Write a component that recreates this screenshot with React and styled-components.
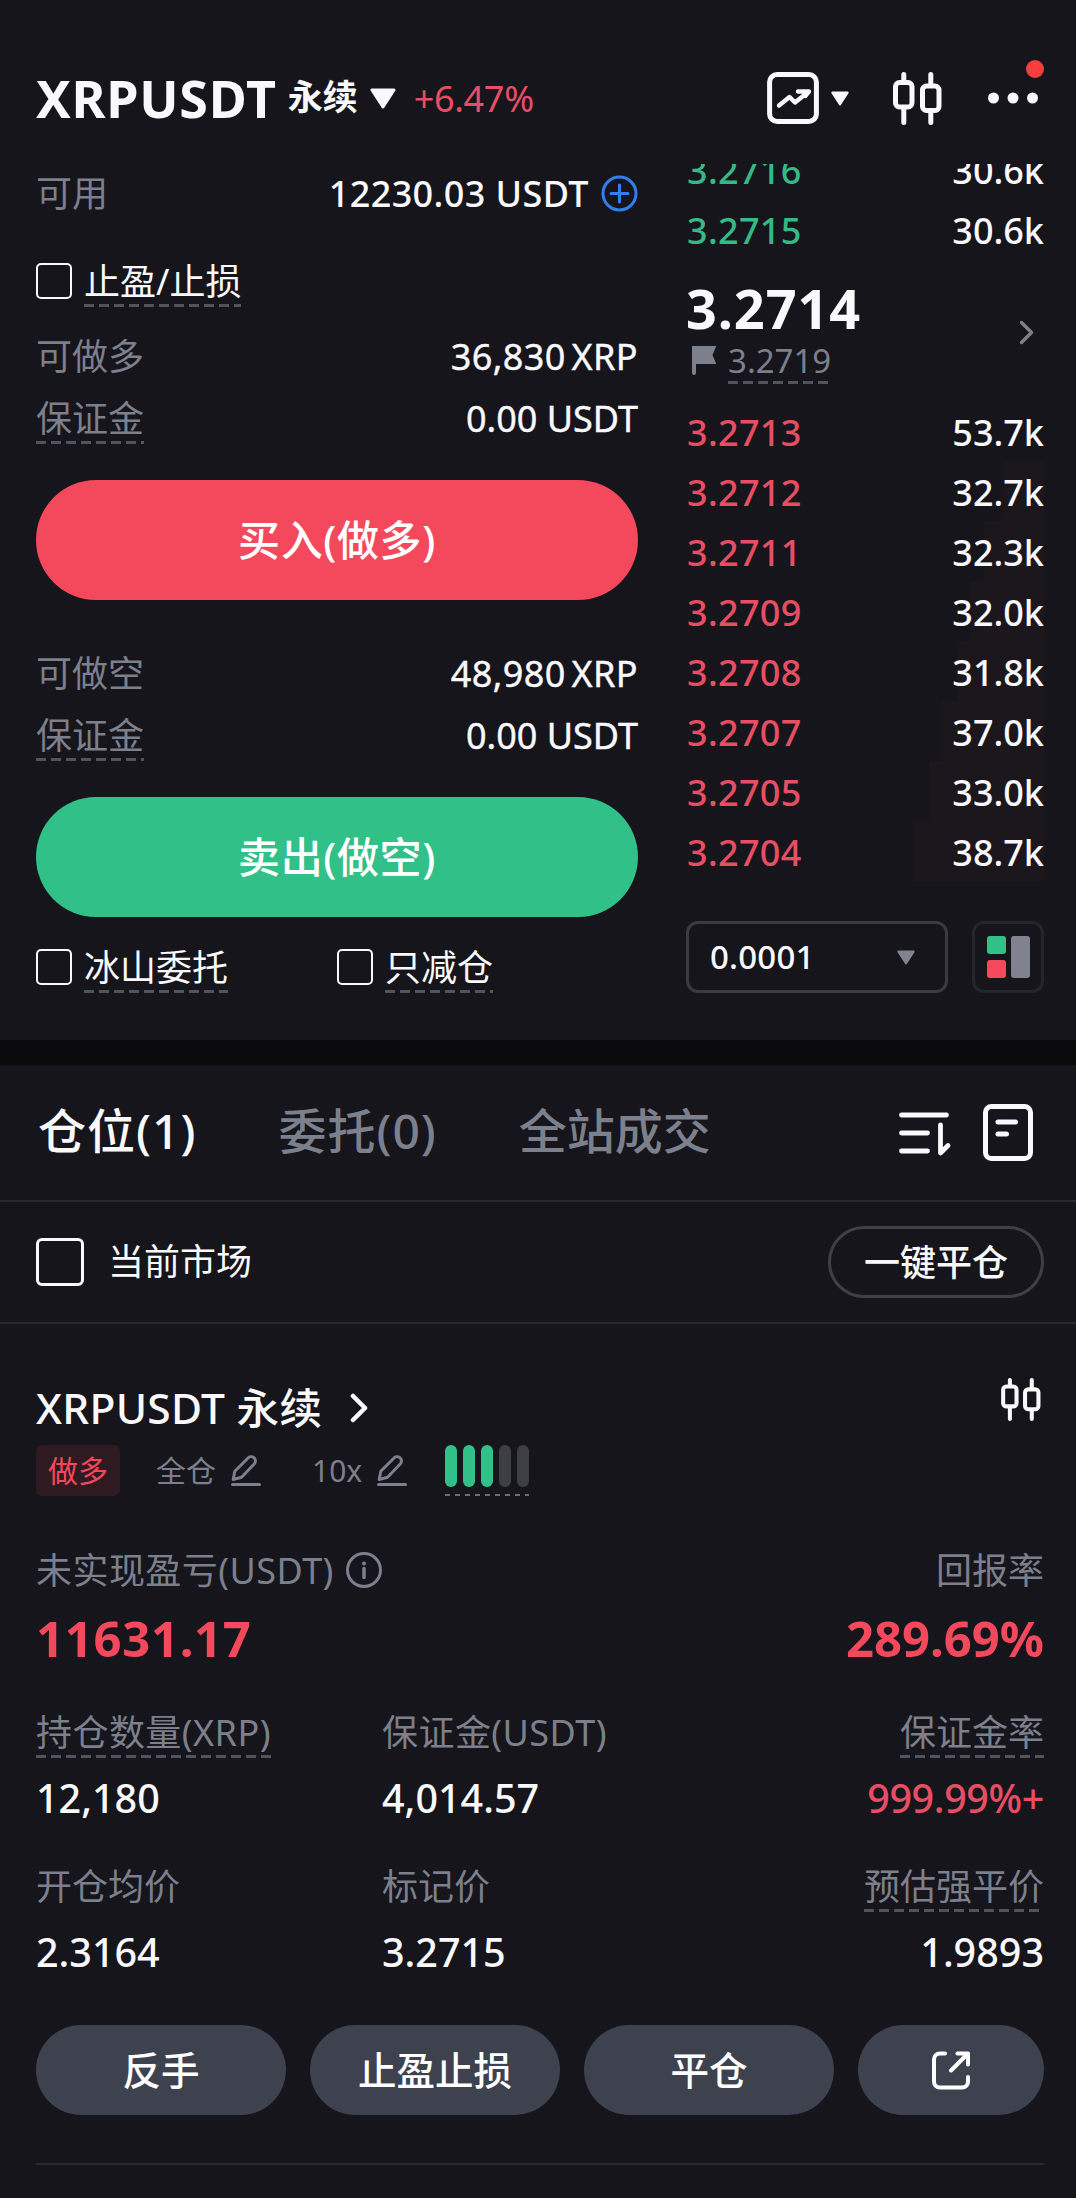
import React, { useState } from 'react';
import styled, { createGlobalStyle } from 'styled-components';

const GlobalStyle = createGlobalStyle`
  * {
    box-sizing: border-box;
  }
  body {
    margin: 0;
    background: #15151b;
    color: #f9f9fc;
    font-family: 'Noto Sans', 'Noto Sans CJK SC', sans-serif;
    font-size: 36px;
    line-height: 52px;
    white-space: nowrap;
  }
  svg {
    display: block;
    flex: none;
  }
`;

const colors = {
  white: '#f9f9fc',
  gray: '#7c7f8c',
  red: '#e84e63',
  green: '#35b986',
  buy: '#f4495d',
  sell: '#31c088',
  line: '#292a30',
};

const Page = styled.main`
  width: 1076px;
  height: 2198px;
  overflow: hidden;
`;

const Header = styled.header`
  display: flex;
  align-items: center;
  height: 164px;
  padding: 32px 36px 0;
`;

const Symbol = styled.h1`
  margin: 0;
  font-size: 52px;
  font-weight: 700;
  letter-spacing: 0.7px;
`;

const ContractType = styled.span`
  margin: -2px 12px 0 11px;
  font-size: 35px;
  font-weight: 700;
`;

const Change = styled.span`
  margin-left: 18px;
  padding-top: 2px;
  letter-spacing: -0.3px;
  color: ${colors.red};
`;

const HeaderTools = styled.div`
  display: flex;
  align-items: center;
  margin-left: auto;
`;

const ModeButton = styled.div`
  display: flex;
  align-items: center;
  gap: 12px;
  margin-right: 44px;
`;

const MoreButton = styled.div`
  position: relative;
  margin: 0 2px 0 46px;
`;

const RedDot = styled.span`
  position: absolute;
  top: -32px;
  right: -6px;
  width: 18px;
  height: 18px;
  border-radius: 50%;
  background: #fa3e3e;
`;

const Trade = styled.section`
  display: grid;
  grid-template-columns: 602px 358px;
  column-gap: 48px;
  height: 876px;
  padding: 0 32px 0 36px;
  overflow: hidden;
`;

const InfoRow = styled.div`
  display: flex;
  align-items: center;
  justify-content: space-between;
  height: ${(p) => p.$height || 62}px;
`;

const Label = styled.span`
  padding-top: 2px;
  color: ${colors.gray};
`;

const Hint = styled.span`
  display: inline-block;
  height: ${(p) => p.$height || 52}px;
  line-height: ${(p) => (p.$height || 52) + 2}px;
  color: ${(p) => (p.$light ? colors.white : colors.gray)};
  background: repeating-linear-gradient(90deg, #51535d 0 10px, transparent 10px 15px) left bottom / 100% 3px
    no-repeat;
`;

const Amount = styled.span`
  padding-top: 2px;
  font-weight: ${(p) => (p.$strong ? 500 : 400)};
  letter-spacing: ${(p) => (p.$strong || p.$tight ? 0.4 : 0)}px;
  word-spacing: ${(p) => (p.$tight ? -4 : 0)}px;
  -webkit-text-stroke: ${(p) => (p.$strong ? 0 : 0.4)}px currentColor;
`;

const Available = styled.div`
  display: flex;
  align-items: center;
  gap: 12px;
`;

const CheckRow = styled.div`
  display: grid;
  grid-template-columns: 301px 301px;
  height: 52px;
  margin: ${(p) => p.$margin};
`;

const CheckLabel = styled.label`
  display: flex;
  align-items: center;
  gap: ${(p) => (p.$large ? 24 : 12)}px;
`;

const CheckBox = styled.span`
  width: ${(p) => (p.$large ? 48 : 36)}px;
  height: ${(p) => (p.$large ? 48 : 36)}px;
  border: ${(p) => (p.$large ? 3 : 2)}px solid ${colors.white};
  border-radius: ${(p) => (p.$large ? 6 : 5)}px;
`;

const OrderButton = styled.button`
  display: block;
  width: 100%;
  height: 120px;
  margin: 31px 0 ${(p) => (p.$side === 'buy' ? 42 : 24)}px;
  padding: 0;
  border: 0;
  border-radius: 60px;
  background: ${(p) => colors[p.$side]};
  color: #fff;
  font: 500 42px/120px 'Noto Sans', 'Noto Sans CJK SC', sans-serif;
  letter-spacing: 0.6px;
`;

const Book = styled.div`
  display: flex;
  flex-direction: column;
`;

const Bids = styled.div`
  display: flex;
  flex-direction: column;
  justify-content: flex-end;
  height: 95px;
  overflow: hidden;
`;

const BookRow = styled.div`
  display: flex;
  flex: none;
  align-items: center;
  justify-content: space-between;
  height: 60px;
  padding: 3px 0 0 1px;
  font-weight: 500;
  color: ${(p) => colors[p.$color]};
  letter-spacing: 0.3px;
`;

const Size = styled.span`
  color: ${colors.white};
  letter-spacing: 0;
`;

const LastPrice = styled.div`
  display: flex;
  align-items: center;
  justify-content: space-between;
  height: 142px;
  padding: 4px 10px 0 0;
`;

const Price = styled.div`
  height: 56px;
  font-size: 54px;
  font-weight: 700;
  line-height: 56px;
  letter-spacing: 0.9px;
`;

const MarkPrice = styled.div`
  display: flex;
  align-items: center;
  gap: 12px;
  height: 48px;
  padding-left: 6px;
  font-size: 33px;
`;

const BookFooter = styled.div`
  display: flex;
  gap: 24px;
  margin-top: 40px;
`;

const Select = styled.div`
  display: flex;
  align-items: center;
  justify-content: space-between;
  width: 262px;
  height: 72px;
  padding: 0 30px 0 21px;
  border: 3px solid #3a3b41;
  border-radius: 12px;
  font-size: 33px;
  font-weight: 500;
  letter-spacing: 0.2px;
`;

const LayoutButton = styled.div`
  display: grid;
  grid-template: 18px 18px / 19px 19px;
  gap: 6px 5px;
  place-content: center;
  width: 72px;
  height: 72px;
  border: 3px solid #24262c;
  border-radius: 12px;
`;

const Cell = styled.span`
  border-radius: 3px;
  background: ${(p) => p.$color};
  grid-row: ${(p) => p.$row};
  grid-column: ${(p) => p.$column};
`;

const Divider = styled.div`
  height: 25px;
  background: #0b0b0e;
`;

const Tabs = styled.nav`
  display: flex;
  align-items: center;
  gap: 82px;
  height: 137px;
  padding: 0 43px 0 38px;
  border-bottom: 2px solid ${colors.line};
`;

const Tab = styled.span`
  padding-bottom: 4px;
  font-size: 48px;
  font-weight: 500;
  letter-spacing: ${(p) => (p.$wide ? 1 : 0)}px;
  color: ${(p) => (p.$active ? colors.white : colors.gray)};
`;

const TabTools = styled.div`
  display: flex;
  align-items: center;
  gap: 31px;
  margin-left: auto;
`;

const FilterBar = styled.div`
  display: flex;
  align-items: center;
  justify-content: space-between;
  height: 122px;
  padding: 0 32px 0 36px;
  border-bottom: 2px solid ${colors.line};
`;

const CloseAll = styled.button`
  width: 216px;
  height: 72px;
  padding: 0;
  border: 3px solid #3f4046;
  border-radius: 36px;
  background: none;
  color: ${colors.white};
  font: 500 36px/68px 'Noto Sans', 'Noto Sans CJK SC', sans-serif;
`;

const Position = styled.section`
  padding: 53px 32px 0 36px;
`;

const TitleRow = styled.div`
  display: flex;
  align-items: center;
  height: 60px;
  padding-top: 1px;
  font-size: 42.5px;
  font-weight: 500;
  letter-spacing: 0.3px;
  svg {
    margin-left: 28px;
  }
  svg:last-child {
    margin: -16px 3px 0 auto;
  }
`;

const TagRow = styled.div`
  display: flex;
  align-items: center;
  height: 67px;
  font-size: 30px;
  color: ${colors.gray};
`;

const SideTag = styled.span`
  width: 84px;
  height: 51px;
  margin-right: 36px;
  border-radius: 6px;
  background: #301a22;
  color: ${colors.buy};
  line-height: 51px;
  text-align: center;
`;

const Editable = styled.span`
  display: flex;
  align-items: center;
  gap: 15px;
  margin-right: ${(p) => p.$space}px;
`;

const Risk = styled.div`
  display: flex;
  gap: 6px;
  height: 51px;
  background: repeating-linear-gradient(90deg, #6b6d76 0 5px, transparent 5px 10px) left bottom / 100% 2px
    no-repeat;
`;

const RiskBar = styled.span`
  width: 12px;
  height: 42px;
  border-radius: 6px;
  background: ${(p) => (p.$on ? colors.sell : '#3e3f44')};
`;

const PnlRow = styled.div`
  display: flex;
  justify-content: space-between;
  margin-top: 40px;
`;

const Stat = styled.div`
  display: flex;
  flex-direction: column;
  align-items: ${(p) => (p.$end ? 'flex-end' : 'flex-start')};
`;

const StatLabel = styled.div`
  display: flex;
  gap: 12px;
  height: 52px;
  color: ${colors.gray};
  line-height: 54px;
  letter-spacing: ${(p) => (p.$wide ? 0.45 : 0)}px;
  svg {
    margin-top: 8px;
  }
`;

const Pnl = styled.div`
  height: 56px;
  margin-top: 14px;
  font-size: 49px;
  font-weight: 700;
  line-height: 56px;
  letter-spacing: ${(p) => p.$spacing}px;
  color: ${colors.buy};
`;

const StatGrid = styled.div`
  display: grid;
  grid-template-columns: 346px 1fr auto;
  row-gap: 36px;
  margin-top: 40px;
`;

const StatValue = styled.div`
  height: 52px;
  margin-top: 14px;
  font-size: 39.5px;
  font-weight: 500;
  letter-spacing: ${(p) => (p.$red ? -0.4 : 0)}px;
  color: ${(p) => (p.$red ? colors.red : colors.white)};
`;

const Actions = styled.div`
  display: grid;
  grid-template-columns: repeat(3, 250px) 186px;
  column-gap: 24px;
  margin-top: 47px;
  padding-bottom: 48px;
  border-bottom: 2px solid ${colors.line};
`;

const Action = styled.button`
  display: flex;
  align-items: center;
  justify-content: center;
  height: 90px;
  padding: 0;
  border: 0;
  border-radius: 45px;
  background: #3d424e;
  color: #fff;
  font: 500 38.5px/90px 'Noto Sans', 'Noto Sans CJK SC', sans-serif;
`;

function Triangle({ width, height, color = colors.white }) {
  return (
    <svg width={width} height={height} viewBox="0 0 26 21">
      <path d="M2 2h22L13 19z" fill={color} stroke={color} strokeWidth="3" strokeLinejoin="round" />
    </svg>
  );
}

function ChartIcon() {
  return (
    <svg width="52" height="52" viewBox="0 0 52 52" fill="none" stroke={colors.white}>
      <rect x="2.6" y="2.6" width="46.8" height="46.8" rx="7.5" strokeWidth="5" />
      <path
        d="M12 33.5l10.5-8.5 5.5 5.5 12.5-10M31 19.5h11l-3.5 4.5"
        strokeWidth="4.4"
        strokeLinecap="round"
        strokeLinejoin="round"
      />
    </svg>
  );
}

function CandlesIcon({ width, height }) {
  return (
    <svg width={width} height={height} viewBox="0 0 49 53" fill="none" stroke={colors.white} strokeWidth="5">
      <rect x="2.5" y="10.5" width="16.5" height="24.5" rx="4" />
      <rect x="29.5" y="14" width="16.5" height="24.5" rx="4" />
      <path d="M10.8 2.5v7M10.8 36v14.5M37.8 2.5v11M37.8 39.5v11" strokeLinecap="round" />
    </svg>
  );
}

function DotsIcon() {
  return (
    <svg width="50" height="12" viewBox="0 0 50 12" fill={colors.white}>
      <circle cx="5.5" cy="6" r="5.5" />
      <circle cx="25" cy="6" r="5.5" />
      <circle cx="44.5" cy="6" r="5.5" />
    </svg>
  );
}

function PlusIcon() {
  return (
    <svg width="37" height="37" viewBox="0 0 37 37" fill="none" stroke="#2f80ed" strokeWidth="3">
      <circle cx="18.5" cy="18.5" r="16.5" />
      <path d="M18.5 10v17M10 18.5h17" strokeLinecap="round" />
    </svg>
  );
}

function FlagIcon() {
  return (
    <svg width="24" height="29" viewBox="0 0 24 29" fill={colors.gray}>
      <path d="M0 0h23.5q1 0 .4 1L20.500 9l3.400 8q.4 1-.5 1H4v9a2 2 0 0 1-4 0z" />
    </svg>
  );
}

function Chevron({ color, width, height, stroke }) {
  return (
    <svg width={width} height={height} viewBox="0 0 15 25" fill="none" stroke={color} strokeWidth={stroke}>
      <path d="M2.5 2.5l10 10-10 10" strokeLinecap="round" strokeLinejoin="round" />
    </svg>
  );
}

function SortIcon() {
  return (
    <svg
      width="53"
      height="46"
      viewBox="0 0 53 46"
      fill="none"
      stroke={colors.white}
      strokeWidth="4.8"
      strokeLinecap="round"
      strokeLinejoin="round"
    >
      <path d="M2.5 5h45M2.5 23h26M2.5 41h26M41.5 15v28l7.5-7.5" />
    </svg>
  );
}

function DocIcon() {
  return (
    <svg width="50" height="57" viewBox="0 0 50 57" fill="none" stroke={colors.white} strokeLinecap="round">
      <rect x="2.5" y="2.5" width="45" height="52" rx="6" strokeWidth="5" />
      <path d="M15 18h17.5M15 30h8.5" strokeWidth="5" />
    </svg>
  );
}

function EditIcon() {
  return (
    <svg width="30" height="32" viewBox="0 0 30 32" fill="none" stroke={colors.gray} strokeWidth="3">
      <path d="M2.2 24.5l1.6-8.3L16.8 3.2a4.3 4.3 0 0 1 6.6 5.6L10.6 22.3z" strokeLinejoin="round" />
      <path d="M1.5 29.5h27" strokeLinecap="round" />
    </svg>
  );
}

function InfoIcon() {
  return (
    <svg width="36" height="36" viewBox="0 0 36 36" fill="none" stroke={colors.gray}>
      <circle cx="18" cy="18" r="16.5" strokeWidth="3" />
      <path d="M18 16.5v9" strokeWidth="3.5" strokeLinecap="round" />
      <circle cx="18" cy="11.5" r="2" fill={colors.gray} stroke="none" />
    </svg>
  );
}

function ShareIcon() {
  return (
    <svg
      width="38"
      height="39"
      viewBox="0 0 38 39"
      fill="none"
      stroke="#fff"
      strokeWidth="4"
      strokeLinecap="round"
      strokeLinejoin="round"
    >
      <path d="M13 2.5H8a6 6 0 0 0-6 6v22a6 6 0 0 0 6 6h22a6 6 0 0 0 6-6V26" />
      <path d="M25.5 2.5H36v11M36 2.5L19 19.5" />
    </svg>
  );
}

const bids = [
  { price: '3.2716', size: '30.6k' },
  { price: '3.2715', size: '30.6k' },
];

const asks = [
  { price: '3.2713', size: '53.7k', depth: 0 },
  { price: '3.2712', size: '32.7k', depth: 40 },
  { price: '3.2711', size: '32.3k', depth: 60 },
  { price: '3.2709', size: '32.0k', depth: 73 },
  { price: '3.2708', size: '31.8k', depth: 87 },
  { price: '3.2707', size: '37.0k', depth: 102 },
  { price: '3.2705', size: '33.0k', depth: 115 },
  { price: '3.2704', size: '38.7k', depth: 131 },
];

const stats = [
  { label: '持仓数量(XRP)', value: '12,180', hint: true, wide: true },
  { label: '保证金(USDT)', value: '4,014.57', wide: true },
  { label: '保证金率', value: '999.99%+', hint: true, red: true, end: true },
  { label: '开仓均价', value: '2.3164' },
  { label: '标记价', value: '3.2715' },
  { label: '预估强平价', value: '1.9893', hint: true, end: true },
];

const tabs = [
  { label: '仓位', count: 1 },
  { label: '委托', count: 0 },
  { label: '全站成交' },
];

function depthStyle(depth) {
  return {
    background: `linear-gradient(rgba(246, 73, 93, 0.03), rgba(246, 73, 93, 0.03)) right / ${depth}px 100% no-repeat`,
  };
}

function OrderInfo({ label, amount, margin }) {
  return (
    <>
      <InfoRow>
        <Label>{label}</Label>
        <Amount $tight>{amount}</Amount>
      </InfoRow>
      <InfoRow>
        <Hint>保证金</Hint>
        <Amount>{margin}</Amount>
      </InfoRow>
    </>
  );
}

function OrderForm() {
  return (
    <div>
      <InfoRow $height={58}>
        <Label>可用</Label>
        <Available>
          <Amount $strong>12230.03 USDT</Amount>
          <PlusIcon />
        </Available>
      </InfoRow>
      <CheckRow $margin="33px 0 18px">
        <CheckLabel>
          <CheckBox />
          <Hint $light>止盈/止损</Hint>
        </CheckLabel>
      </CheckRow>
      <OrderInfo label="可做多" amount="36,830 XRP" margin="0.00 USDT" />
      <OrderButton type="button" $side="buy">
        买入(做多)
      </OrderButton>
      <OrderInfo label="可做空" amount="48,980 XRP" margin="0.00 USDT" />
      <OrderButton type="button" $side="sell">
        卖出(做空)
      </OrderButton>
      <CheckRow $margin="0">
        <CheckLabel>
          <CheckBox />
          <Hint $light>冰山委托</Hint>
        </CheckLabel>
        <CheckLabel>
          <CheckBox />
          <Hint $light>只减仓</Hint>
        </CheckLabel>
      </CheckRow>
    </div>
  );
}

function OrderBook() {
  return (
    <Book>
      <Bids>
        {bids.map((row) => (
          <BookRow key={row.price} $color="green">
            {row.price}
            <Size>{row.size}</Size>
          </BookRow>
        ))}
      </Bids>
      <LastPrice>
        <div>
          <Price>3.2714</Price>
          <MarkPrice>
            <FlagIcon />
            <Hint $height={48}>3.2719</Hint>
          </MarkPrice>
        </div>
        <Chevron color={colors.gray} width={15} height={25} stroke={3.5} />
      </LastPrice>
      {asks.map((row) => (
        <BookRow key={row.price} $color="red" style={depthStyle(row.depth)}>
          {row.price}
          <Size>{row.size}</Size>
        </BookRow>
      ))}
      <BookFooter>
        <Select>
          0.0001
          <Triangle width={18} height={15} color="#80838f" />
        </Select>
        <LayoutButton>
          <Cell $color={colors.sell} $row="1" $column="1" />
          <Cell $color={colors.buy} $row="2" $column="1" />
          <Cell $color="#80838f" $row="1 / 3" $column="2" />
        </LayoutButton>
      </BookFooter>
    </Book>
  );
}

function App() {
  const [activeTab, setActiveTab] = useState(0);

  return (
    <Page>
      <GlobalStyle />
      <Header>
        <Symbol>XRPUSDT</Symbol>
        <ContractType>永续</ContractType>
        <Triangle width={26} height={21} />
        <Change>+6.47%</Change>
        <HeaderTools>
          <ModeButton>
            <ChartIcon />
            <Triangle width={18} height={15} />
          </ModeButton>
          <CandlesIcon width={49} height={53} />
          <MoreButton>
            <DotsIcon />
            <RedDot />
          </MoreButton>
        </HeaderTools>
      </Header>

      <Trade>
        <OrderForm />
        <OrderBook />
      </Trade>

      <Divider />

      <Tabs>
        {tabs.map(({ label, count }, i) => (
          <Tab
            key={label}
            $active={i === activeTab}
            $wide={count !== undefined}
            onClick={() => setActiveTab(i)}
          >
            {count === undefined ? label : `${label}(${count})`}
          </Tab>
        ))}
        <TabTools>
          <SortIcon />
          <DocIcon />
        </TabTools>
      </Tabs>

      <FilterBar>
        <CheckLabel $large>
          <CheckBox $large />
          <span>当前市场</span>
        </CheckLabel>
        <CloseAll type="button">一键平仓</CloseAll>
      </FilterBar>

      <Position>
        <TitleRow>
          XRPUSDT 永续
          <Chevron color={colors.white} width={18} height={30} stroke={3.8} />
          <CandlesIcon width={40} height={43} />
        </TitleRow>
        <TagRow>
          <SideTag>做多</SideTag>
          <Editable $space={51}>
            全仓
            <EditIcon />
          </Editable>
          <Editable $space={38}>
            10x
            <EditIcon />
          </Editable>
          <Risk>
            {[1, 2, 3, 4, 5].map((level) => (
              <RiskBar key={level} $on={level <= 3} />
            ))}
          </Risk>
        </TagRow>

        <PnlRow>
          <Stat>
            <StatLabel $wide>
              未实现盈亏(USDT)
              <InfoIcon />
            </StatLabel>
            <Pnl $spacing={0.7}>11631.17</Pnl>
          </Stat>
          <Stat $end>
            <StatLabel>回报率</StatLabel>
            <Pnl $spacing={0}>289.69%</Pnl>
          </Stat>
        </PnlRow>

        <StatGrid>
          {stats.map((stat) => (
            <Stat key={stat.label} $end={stat.end}>
              <StatLabel $wide={stat.wide}>
                {stat.hint ? <Hint>{stat.label}</Hint> : stat.label}
              </StatLabel>
              <StatValue $red={stat.red}>{stat.value}</StatValue>
            </Stat>
          ))}
        </StatGrid>

        <Actions>
          <Action type="button">反手</Action>
          <Action type="button">止盈止损</Action>
          <Action type="button">平仓</Action>
          <Action type="button">
            <ShareIcon />
          </Action>
        </Actions>
      </Position>
    </Page>
  );
}

export default App;
